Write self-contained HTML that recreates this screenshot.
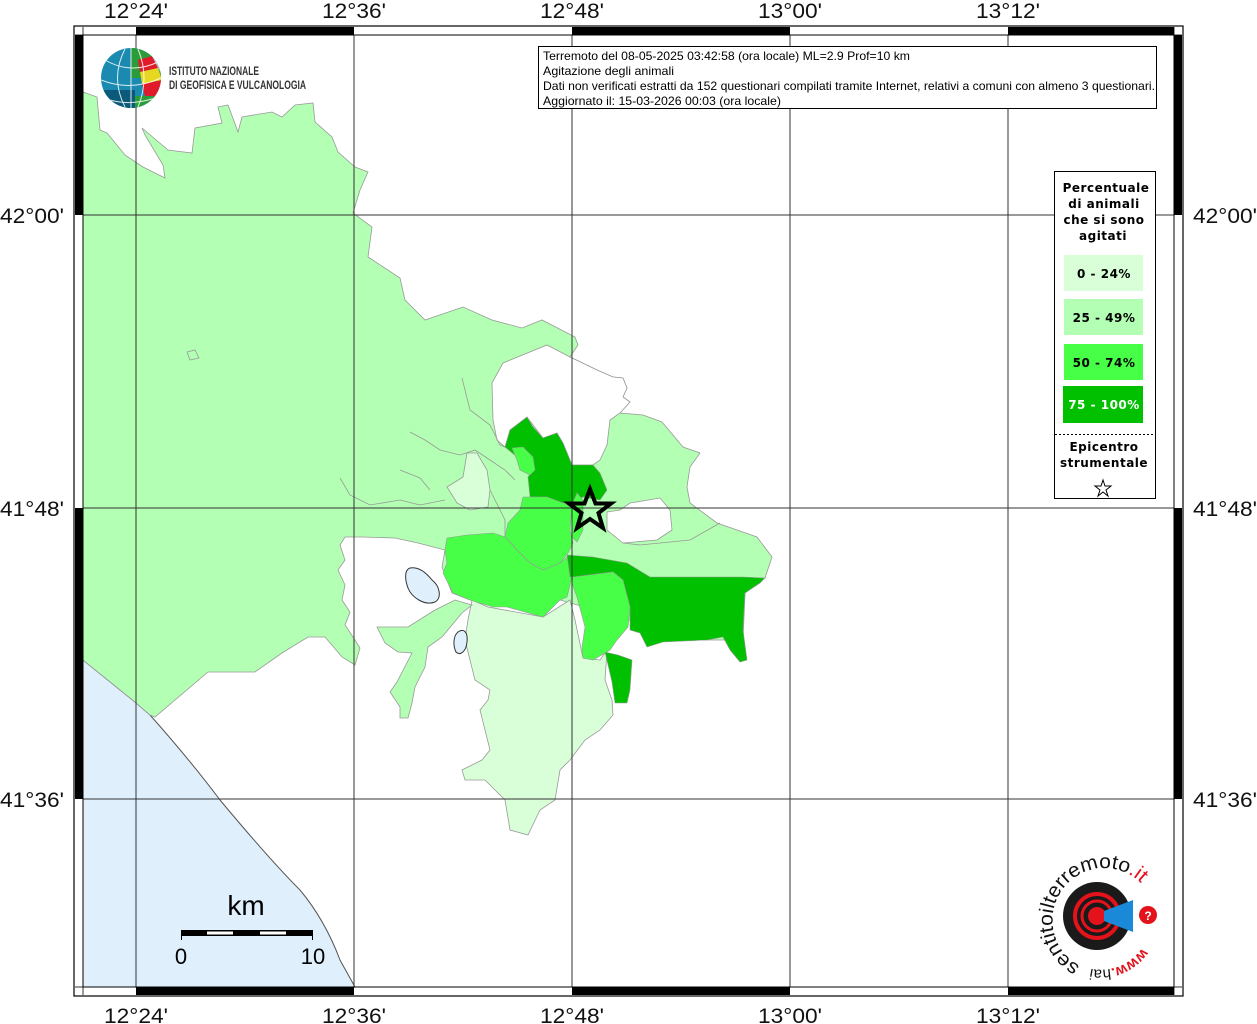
<!DOCTYPE html>
<html><head><meta charset="utf-8"><style>
html,body{margin:0;padding:0;background:#fff;}
svg{display:block;}
text{font-family:"Liberation Sans",sans-serif;}
.leg{font-family:"DejaVu Sans",sans-serif;font-weight:bold;font-size:12px;text-anchor:middle;letter-spacing:0.5px;}
</style></head><body>
<svg width="1257" height="1024" viewBox="0 0 1257 1024" xmlns="http://www.w3.org/2000/svg">
<rect width="1257" height="1024" fill="#fff"/>
<!-- sea -->
<path d="M83,660 L135,702 L150,715 Q190,760 220,800 Q270,860 300,890 Q325,920 340,960 L355,987 L83,987 Z" fill="#dff0fc" stroke="#555" stroke-width="1"/>
<!-- envelope light green -->
<polygon fill="#b3ffb3" stroke="#999" stroke-width="0.8" points="83,92 97,97 100,130 107,133 125,155 143,167 165,178 163,165 145,135 142,128 168,150 192,153 195,128 222,123 218,107 228,105 238,132 242,117 272,112 282,117 295,105 313,103 315,122 332,137 338,152 355,167 368,172 360,190 353,213 372,227 368,257 400,278 405,300 425,320 463,307 492,320 522,328 542,320 575,337 578,345 570,357 597,370 613,377 623,378 627,388 623,397 630,402 620,413 643,415 662,422 683,447 700,453 690,467 687,487 690,503 717,523 757,537 772,557 765,578 745,593 743,640 700,640 630,620 560,600 470,600 452,593 442,567 445,550 418,543 395,538 362,537 345,537 340,545 345,560 338,570 345,585 342,600 350,612 345,625 355,640 360,648 355,665 342,657 325,637 308,637 282,653 255,672 208,672 155,717 150,715 135,702 83,660"/>
<!-- white holes -->
<polygon fill="#fff" stroke="#999" stroke-width="0.8" points="492,383 503,363 547,345 570,357 597,370 613,377 623,378 627,388 623,397 630,402 620,413 610,420 607,445 600,460 593,465 572,465 563,443 557,433 543,438 527,417 510,430 505,447 497,440 493,420"/>
<polygon fill="#fff" stroke="#999" stroke-width="0.8" points="607,512 620,510 630,503 660,498 670,510 672,530 657,540 623,543 607,530"/>
<!-- internal boundaries -->
<g fill="none" stroke="#999" stroke-width="0.8">
<path d="M462,378 L470,410 L490,425 L500,445 L505,447"/>
<path d="M410,432 L425,440 L440,450 L460,455 L475,450 L490,460 L505,470 L515,480"/>
<path d="M340,478 L350,495 L370,505 L400,500 L420,505 L445,500"/>
<path d="M400,470 L420,478 L430,490"/>
<path d="M490,490 L505,520 L505,540"/>
<path d="M623,543 L640,545 L690,540 L720,523"/>
<path d="M187,352 L195,350 L199,358 L190,360 Z"/>
</g>
<!-- lightest west -->
<polygon fill="#d9ffd9" stroke="#999" stroke-width="0.8" points="447,487 463,477 467,453 477,453 487,470 490,490 488,507 470,510 457,503"/>
<!-- lightest south -->
<polygon fill="#d9ffd9" stroke="#999" stroke-width="0.8" points="472,600 488,607 543,617 570,600 575,620 583,658 600,660 607,650 605,680 612,700 613,715 600,730 585,740 570,760 560,770 555,800 540,810 528,835 510,830 505,800 495,790 485,780 465,780 462,770 482,760 490,750 485,730 480,710 488,700 490,690 475,680 470,660 465,640 468,620"/>
<!-- SW strip -->
<polygon fill="#b3ffb3" stroke="#999" stroke-width="0.8" points="377,627 408,627 435,610 455,600 472,605 462,613 442,637 428,647 425,667 415,687 412,703 408,718 400,718 400,707 390,692 397,682 412,653 398,652 385,643"/>
<!-- lakes -->
<path d="M410,568 C420,566 428,575 432,580 C440,586 442,598 435,602 C425,606 412,598 408,588 C405,580 404,570 410,568 Z" fill="#dff0fc" stroke="#333" stroke-width="1"/>
<path d="M458,632 C464,628 468,632 467,642 C466,652 460,656 456,652 C453,646 453,636 458,632 Z" fill="#dff0fc" stroke="#333" stroke-width="1"/>
<!-- dark green north -->
<polygon fill="#00c000" stroke="#999" stroke-width="0.6" points="505,447 510,430 527,417 533,427 543,438 557,433 563,443 572,465 593,465 600,473 607,490 600,500 583,497 573,503 563,503 547,497 530,497 528,477 533,470 527,463 517,457"/>
<polygon fill="#47ff47" stroke="#999" stroke-width="0.6" points="512,448 523,447 533,457 535,470 530,475 520,470 517,460"/>
<!-- medium green central -->
<polygon fill="#47ff47" stroke="#999" stroke-width="0.6" points="523,497 547,497 563,503 572,507 570,530 573,543 568,553 560,563 543,570 530,563 517,550 505,537 508,523 520,510"/>
<polygon fill="#47ff47" stroke="#999" stroke-width="0.6" points="577,493 583,500 583,530 577,542 572,537 572,505"/>
<!-- medium green west -->
<polygon fill="#47ff47" stroke="#999" stroke-width="0.6" points="447,538 467,535 493,533 505,537 517,550 530,563 543,570 560,563 567,557 572,577 567,597 560,600 543,617 507,607 493,607 470,600 453,593 443,573 447,563 445,550"/>
<!-- dark east -->
<polygon fill="#00c000" stroke="#999" stroke-width="0.6" points="567,555 593,557 627,563 650,577 697,577 743,577 765,578 760,583 745,593 743,630 747,660 740,662 730,650 723,637 707,640 663,642 647,647 640,633 630,630 630,607 623,580 613,572 573,577 570,577"/>
<polygon fill="#00c000" stroke="#999" stroke-width="0.6" points="605,652 618,655 632,660 630,690 627,703 615,703 612,682"/>
<!-- medium south-center -->
<polygon fill="#47ff47" stroke="#999" stroke-width="0.6" points="573,577 613,572 623,580 630,607 628,627 617,640 610,650 593,660 583,658 582,647 585,627 577,597 572,583"/>
<!-- grid -->
<g stroke="#333" stroke-width="1">
<line x1="136" y1="35" x2="136" y2="987"/><line x1="354" y1="35" x2="354" y2="987"/><line x1="572" y1="35" x2="572" y2="987"/><line x1="790" y1="35" x2="790" y2="987"/><line x1="1008" y1="35" x2="1008" y2="987"/>
<line x1="83" y1="215" x2="1174" y2="215"/><line x1="83" y1="508" x2="1174" y2="508"/><line x1="83" y1="799" x2="1174" y2="799"/>
</g>
<!-- star -->
<polygon points="590,489 595.5,503.5 611,503.5 598.5,513 603,528 590,519 577,528 581.5,513 569,503.5 584.5,503.5" fill="none" stroke="#000" stroke-width="4" stroke-linejoin="miter"/>
<!-- frame -->
<rect x="74" y="26" width="1109" height="970" fill="none" stroke="#000" stroke-width="1.2"/>
<rect x="83" y="35" width="1091" height="952" fill="none" stroke="#000" stroke-width="1"/>
<g fill="#000">
<rect x="136" y="27" width="218" height="8"/><rect x="572" y="27" width="218" height="8"/><rect x="1008" y="27" width="166" height="8"/>
<rect x="136" y="987" width="218" height="8"/><rect x="572" y="987" width="218" height="8"/><rect x="1008" y="987" width="166" height="8"/>
<rect x="75" y="35" width="8" height="180"/><rect x="75" y="508" width="8" height="291"/>
<rect x="1174" y="35" width="8" height="180"/><rect x="1174" y="508" width="8" height="291"/>
</g>
<g fill="none" stroke="#000" stroke-width="0.8"><line x1="83" y1="27" x2="83" y2="35"/><line x1="1174" y1="27" x2="1174" y2="35"/><line x1="83" y1="987" x2="83" y2="995"/><line x1="1174" y1="987" x2="1174" y2="995"/><line x1="75" y1="35" x2="83" y2="35"/><line x1="1174" y1="35" x2="1182" y2="35"/><line x1="75" y1="987" x2="83" y2="987"/><line x1="1174" y1="987" x2="1182" y2="987"/></g>
<!-- axis labels -->
<g font-size="21" text-anchor="middle" fill="#111">
<text x="136" y="18" textLength="64" lengthAdjust="spacingAndGlyphs">12°24'</text>
<text x="354" y="18" textLength="64" lengthAdjust="spacingAndGlyphs">12°36'</text>
<text x="572" y="18" textLength="64" lengthAdjust="spacingAndGlyphs">12°48'</text>
<text x="790" y="18" textLength="64" lengthAdjust="spacingAndGlyphs">13°00'</text>
<text x="1008" y="18" textLength="64" lengthAdjust="spacingAndGlyphs">13°12'</text>
<text x="136" y="1023" textLength="64" lengthAdjust="spacingAndGlyphs">12°24'</text>
<text x="354" y="1023" textLength="64" lengthAdjust="spacingAndGlyphs">12°36'</text>
<text x="572" y="1023" textLength="64" lengthAdjust="spacingAndGlyphs">12°48'</text>
<text x="790" y="1023" textLength="64" lengthAdjust="spacingAndGlyphs">13°00'</text>
<text x="1008" y="1023" textLength="64" lengthAdjust="spacingAndGlyphs">13°12'</text>
</g>
<g font-size="21" fill="#111">
<text x="0" y="223" textLength="64" lengthAdjust="spacingAndGlyphs">42°00'</text>
<text x="0" y="516" textLength="64" lengthAdjust="spacingAndGlyphs">41°48'</text>
<text x="0" y="807" textLength="64" lengthAdjust="spacingAndGlyphs">41°36'</text>
<text x="1193" y="223" textLength="64" lengthAdjust="spacingAndGlyphs">42°00'</text>
<text x="1193" y="516" textLength="64" lengthAdjust="spacingAndGlyphs">41°48'</text>
<text x="1193" y="807" textLength="64" lengthAdjust="spacingAndGlyphs">41°36'</text>
</g>
<!-- header box -->
<rect x="538.5" y="46.5" width="618" height="62" fill="#fff" stroke="#000" stroke-width="1"/>
<g font-size="12" fill="#000">
<text x="543" y="60" textLength="367" lengthAdjust="spacingAndGlyphs">Terremoto del 08-05-2025 03:42:58 (ora locale) ML=2.9 Prof=10 km</text>
<text x="543" y="75" textLength="131" lengthAdjust="spacingAndGlyphs">Agitazione degli animali</text>
<text x="543" y="90" textLength="612" lengthAdjust="spacingAndGlyphs">Dati non verificati estratti da 152 questionari compilati tramite Internet, relativi a comuni con almeno 3 questionari.</text>
<text x="543" y="105" textLength="238" lengthAdjust="spacingAndGlyphs">Aggiornato il: 15-03-2026 00:03 (ora locale)</text>
</g>
<!-- legend -->
<rect x="1054.5" y="171.5" width="101" height="327" fill="#fff" stroke="#000" stroke-width="1"/>
<text class="leg" x="1106" y="192">Percentuale</text>
<text class="leg" x="1104" y="208">di animali</text>
<text class="leg" x="1104" y="224">che si sono</text>
<text class="leg" x="1103" y="240">agitati</text>
<rect x="1064" y="255" width="79" height="36" fill="#d9ffd9"/>
<text class="leg" x="1104" y="278">0 - 24%</text>
<rect x="1064" y="299" width="79" height="36" fill="#b3ffb3"/>
<text class="leg" x="1104" y="322">25 - 49%</text>
<rect x="1064" y="344" width="79" height="36" fill="#47ff47"/>
<text class="leg" x="1104" y="367">50 - 74%</text>
<rect x="1063" y="386" width="80" height="37" fill="#00c000"/>
<text class="leg" x="1104" y="409" fill="#fff">75 - 100%</text>
<line x1="1055" y1="434.5" x2="1155" y2="434.5" stroke="#000" stroke-dasharray="2,2"/>
<text class="leg" x="1104" y="451">Epicentro</text>
<text class="leg" x="1104" y="467">strumentale</text>
<polygon points="1103,480 1105,486 1111,486 1106,490 1108,496 1103,492 1098,496 1100,490 1095,486 1101,486" fill="none" stroke="#000" stroke-width="1"/>
<!-- scale bar -->
<text x="246" y="915" font-size="28" text-anchor="middle">km</text>
<rect x="181" y="930" width="132" height="6" fill="#000"/>
<rect x="207" y="931.5" width="26" height="3" fill="#fff"/><rect x="260" y="931.5" width="26" height="3" fill="#fff"/>
<line x1="181.5" y1="930" x2="181.5" y2="940" stroke="#000"/><line x1="312.5" y1="930" x2="312.5" y2="940" stroke="#000"/>
<text x="181" y="964" font-size="22" text-anchor="middle">0</text>
<text x="313" y="964" font-size="22" text-anchor="middle">10</text>
<!-- INGV logo -->
<defs><clipPath id="gc"><circle cx="131" cy="78" r="30"/></clipPath></defs>
<g clip-path="url(#gc)">
<rect x="100" y="47" width="62" height="62" fill="#1b8ab0"/>
<polygon points="131,47 162,47 162,78 131,78" fill="#2a9c3a"/>
<polygon points="138,60 152,56 158,68 140,72" fill="#e01a2a"/>
<polygon points="140,72 158,68 162,80 142,84" fill="#e6d820"/>
<polygon points="142,84 162,80 162,100 145,96" fill="#e01a2a"/>
<polygon points="131,96 162,96 162,109 131,109" fill="#2a9c3a"/>
<polygon points="152,56 162,52 162,75 158,68" fill="#c8b8d0"/>
<rect x="100" y="90" width="35" height="20" fill="#0c5a7a"/>
<g fill="none" stroke="#fff" stroke-width="1" opacity="0.85">
<path d="M105,60 Q131,75 158,62"/><path d="M101,80 Q131,92 161,78"/><path d="M110,100 Q131,106 155,98"/>
<path d="M125,49 Q110,78 125,107"/><path d="M138,49 Q150,78 138,107"/><path d="M131,48 L131,108"/>
</g>
</g>
<text x="169" y="75" font-size="12" font-weight="bold" fill="#333" textLength="90" lengthAdjust="spacingAndGlyphs">ISTITUTO NAZIONALE</text>
<text x="169" y="89" font-size="12" font-weight="bold" fill="#333" textLength="137" lengthAdjust="spacingAndGlyphs">DI GEOFISICA E VULCANOLOGIA</text>
<!-- haisentito logo -->
<circle cx="1097" cy="916" r="34" fill="#1a1a1a"/>
<circle cx="1097" cy="916" r="22" fill="none" stroke="#e3121b" stroke-width="4"/>
<circle cx="1097" cy="916" r="15" fill="none" stroke="#e3121b" stroke-width="3"/>
<circle cx="1097" cy="916" r="9" fill="#e3121b"/>
<polygon points="1104,911 1133,900 1133,932 1104,921" fill="#1a8ad8"/>
<circle cx="1148" cy="915" r="9" fill="#e3121b"/>
<text x="1148" y="920" font-size="12" font-weight="bold" fill="#fff" text-anchor="middle">?</text>
<defs><path id="arc" d="M1080,966 A52,52 0 1,1 1150,895"/><path id="arc2" d="M1142,948 A50,50 0 0,1 1082,966"/></defs>
<text font-size="20" fill="#111"><textPath href="#arc" textLength="178" lengthAdjust="spacingAndGlyphs">sentitoilterremoto<tspan fill="#e3121b">.it</tspan></textPath></text>
<text font-size="15" fill="#111"><textPath href="#arc2"><tspan fill="#e3121b" font-weight="bold">www.</tspan>hai</textPath></text>
</svg>
</body></html>
